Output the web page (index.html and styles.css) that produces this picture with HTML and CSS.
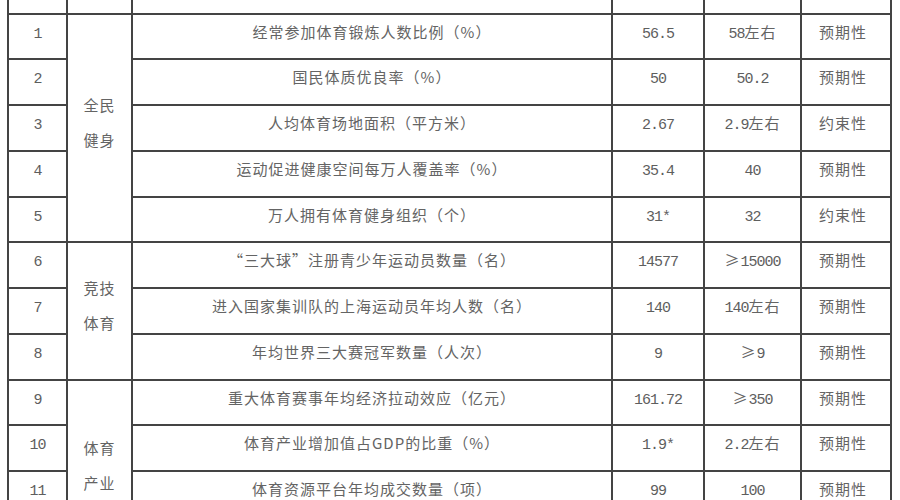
FILE: index.html
```html
<!DOCTYPE html>
<html lang="zh-CN">
<head>
<meta charset="utf-8">
<title>体育发展主要指标</title>
<link rel="stylesheet" href="styles.css">
</head>
<body>
<table class="sheet">
  <colgroup>
    <col class="c-no"><col class="c-cat"><col class="c-name"><col class="c-now"><col class="c-goal"><col class="c-kind">
  </colgroup>
  <tbody>
    <tr class="head"><td></td><td></td><td></td><td></td><td></td><td></td></tr>
    <tr>
      <td class="num"><span class="n">1</span></td>
      <td class="cat" rowspan="5"><div>全民</div><div>健身</div></td>
      <td>经常参加体育锻炼人数比例（%）</td>
      <td><span class="n">56.5</span></td>
      <td><span class="n">58</span>左右</td>
      <td class="kind">预期性</td>
    </tr>
    <tr>
      <td class="num"><span class="n">2</span></td>
      <td>国民体质优良率（%）</td>
      <td><span class="n">50</span></td>
      <td><span class="n">50.2</span></td>
      <td class="kind">预期性</td>
    </tr>
    <tr>
      <td class="num"><span class="n">3</span></td>
      <td>人均体育场地面积（平方米）</td>
      <td><span class="n">2.67</span></td>
      <td><span class="n">2.9</span>左右</td>
      <td class="kind">约束性</td>
    </tr>
    <tr>
      <td class="num"><span class="n">4</span></td>
      <td>运动促进健康空间每万人覆盖率（%）</td>
      <td><span class="n">35.4</span></td>
      <td><span class="n">40</span></td>
      <td class="kind">预期性</td>
    </tr>
    <tr>
      <td class="num"><span class="n">5</span></td>
      <td>万人拥有体育健身组织（个）</td>
      <td><span class="n">31*</span></td>
      <td><span class="n">32</span></td>
      <td class="kind">约束性</td>
    </tr>
    <tr>
      <td class="num"><span class="n">6</span></td>
      <td class="cat" rowspan="3"><div>竞技</div><div>体育</div></td>
      <td>“三大球”注册青少年运动员数量（名）</td>
      <td><span class="n">14577</span></td>
      <td>≥<span class="n">15000</span></td>
      <td class="kind">预期性</td>
    </tr>
    <tr>
      <td class="num"><span class="n">7</span></td>
      <td>进入国家集训队的上海运动员年均人数（名）</td>
      <td><span class="n">140</span></td>
      <td><span class="n">140</span>左右</td>
      <td class="kind">预期性</td>
    </tr>
    <tr>
      <td class="num"><span class="n">8</span></td>
      <td>年均世界三大赛冠军数量（人次）</td>
      <td><span class="n">9</span></td>
      <td>≥<span class="n">9</span></td>
      <td class="kind">预期性</td>
    </tr>
    <tr>
      <td class="num"><span class="n">9</span></td>
      <td class="cat" rowspan="4"><div>体育</div><div>产业</div></td>
      <td>重大体育赛事年均经济拉动效应（亿元）</td>
      <td><span class="n">161.72</span></td>
      <td>≥<span class="n">350</span></td>
      <td class="kind">预期性</td>
    </tr>
    <tr>
      <td class="num"><span class="n">10</span></td>
      <td>体育产业增加值占GDP的比重（%）</td>
      <td><span class="n">1.9*</span></td>
      <td><span class="n">2.2</span>左右</td>
      <td class="kind">预期性</td>
    </tr>
    <tr>
      <td class="num"><span class="n">11</span></td>
      <td>体育资源平台年均成交数量（项）</td>
      <td><span class="n">99</span></td>
      <td><span class="n">100</span></td>
      <td class="kind">预期性</td>
    </tr>
    <tr>
      <td class="num"><span class="n">12</span></td>
      <td></td>
      <td></td>
      <td></td>
      <td class="kind"></td>
    </tr>
  </tbody>
</table>
</body>
</html>
```

FILE: styles.css
```css
html, body {
  margin: 0;
  padding: 0;
  background: #ffffff;
}

body {
  padding-left: 7px;
  overflow: hidden;
  height: 500px;
}

.sheet {
  border-collapse: collapse;
  table-layout: fixed;
  width: 883px;
  font-family: "Noto Sans CJK SC", "Noto Sans", sans-serif;
  font-size: 15px;
  color: #646464;
}

.c-no { width: 59px; }
.c-cat { width: 65px; }
.c-name { width: 480px; }
.c-now { width: 92px; }
.c-goal { width: 97px; }
.c-kind { width: 90px; }

.sheet td {
  border: 2px solid #444444;
  height: 45.75px;
  box-sizing: border-box;
  padding: 6px 0 0 0;
  vertical-align: top;
  text-align: center;
  line-height: 22px;
  letter-spacing: 1px;
  white-space: nowrap;
}

.sheet tr.head td {
  height: 13.5px;
  padding: 0;
  border-top: none;
}

.sheet td.cat {
  vertical-align: middle;
  padding: 0 0 12px 0;
  line-height: 35px;
}

.sheet td.kind {
  padding-right: 6px;
}

.n {
  font-family: "Liberation Mono", monospace;
  font-size: 15px;
  letter-spacing: -1px;
  color: #5e5e5e;
}
```
